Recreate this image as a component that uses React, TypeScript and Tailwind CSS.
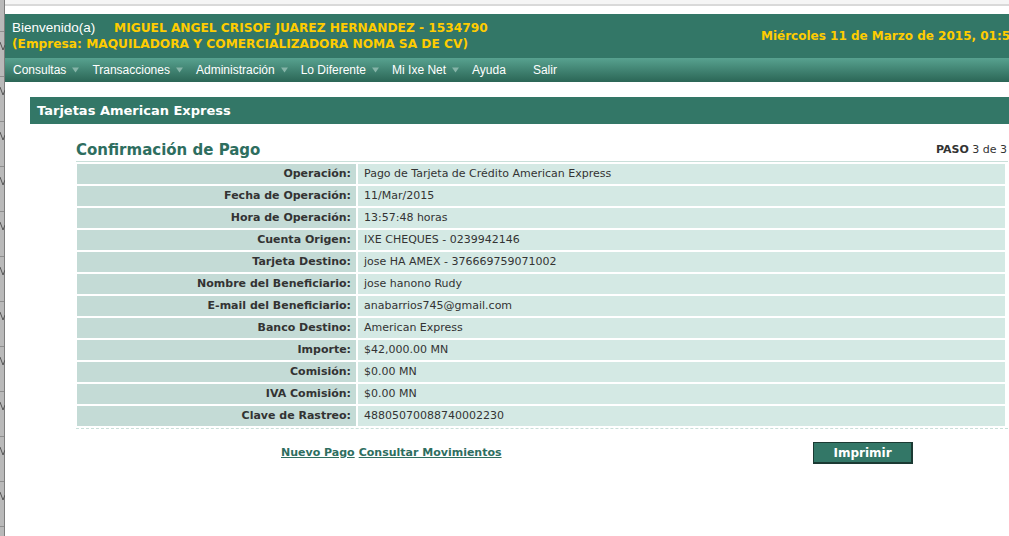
import React from 'react';

const rows: [string, string][] = [
  ['Operación:', 'Pago de Tarjeta de Crédito American Express'],
  ['Fecha de Operación:', '11/Mar/2015'],
  ['Hora de Operación:', '13:57:48 horas'],
  ['Cuenta Origen:', 'IXE CHEQUES - 0239942146'],
  ['Tarjeta Destino:', 'jose HA AMEX - 376669759071002'],
  ['Nombre del Beneficiario:', 'jose hanono Rudy'],
  ['E-mail del Beneficiario:', 'anabarrios745@gmail.com'],
  ['Banco Destino:', 'American Express'],
  ['Importe:', '$42,000.00 MN'],
  ['Comisión:', '$0.00 MN'],
  ['IVA Comisión:', '$0.00 MN'],
  ['Clave de Rastreo:', '48805070088740002230'],
];

const menu = [
  { label: 'Consultas', arrow: true },
  { label: 'Transacciones', arrow: true },
  { label: 'Administración', arrow: true },
  { label: 'Lo Diferente', arrow: true },
  { label: 'Mi Ixe Net', arrow: true },
  { label: 'Ayuda', arrow: false },
  { label: 'Salir', arrow: false },
];

const verdana = "font-['DejaVu_Sans',Verdana,sans-serif]";
const helv = "font-['Liberation_Sans',Arial,sans-serif]";

function Arrow() {
  return (
    <svg width="7" height="6" viewBox="0 0 7 6" className="ml-[6px] mr-[13px]">
      <path d="M0 0.5 L7 0.5 L3.5 5.5 Z" fill="#86b4a8" />
    </svg>
  );
}

function SideStrip() {
  return (
    <div className="w-[5px] shrink-0 bg-[#b9b9b9] border-r border-[#7d7d7d] flex flex-col">
      <div className="h-[32px] shrink-0 border-b border-[#8e8e8e]" />
      {Array.from({ length: 11 }).map((_, i) => (
        <div key={i} className="h-[45px] shrink-0 border-b border-[#8e8e8e] pt-[10px]">
          <svg width="5" height="9" viewBox="0 0 5 9">
            <path d="M0 0 L3 8 L5 3" stroke="#555" strokeWidth="1" fill="none" />
          </svg>
        </div>
      ))}
    </div>
  );
}

export default function App() {
  return (
    <div className="w-[1009px] h-[536px] overflow-hidden flex bg-white">
      <SideStrip />
      <div className="flex-1 min-w-0 overflow-hidden">
        {/* top window edge */}
        <div className="h-[4px] bg-[#f5f5f5]" />
        <div className="h-[2px] bg-[#d9d9d9]" />
        <div className="h-[8px] bg-white" />

        {/* header */}
        <div className="bg-[#337767] pl-[7px] pt-[6px] pb-[6px] flex items-center whitespace-nowrap">
          <div className="w-[749px] shrink-0">
            <div className="flex h-[16px] items-center">
              <span className={`${helv} text-[13.5px] text-white w-[102px] shrink-0`}>Bienvenido(a)</span>
              <span className={`${verdana} text-[12.2px] font-bold text-[#ffcc00]`}>
                MIGUEL ANGEL CRISOF JUAREZ HERNANDEZ - 1534790
              </span>
            </div>
            <div className={`${verdana} h-[16px] flex items-center text-[12.2px] font-bold text-[#ffcc00]`}>
              (Empresa: MAQUILADORA Y COMERCIALIZADORA NOMA SA DE CV)
            </div>
          </div>
          <div className={`${verdana} shrink-0 text-[12px] font-bold text-[#ffcc00]`}>
            Miércoles 11 de Marzo de 2015, 01:57 pm
          </div>
        </div>

        {/* menu */}
        <div className="h-[24px] bg-gradient-to-b from-[#58a290] to-[#2b6656] flex items-center pl-[8px] whitespace-nowrap">
          {menu.map((m) => (
            <div key={m.label} className="flex items-center">
              <span className={`${helv} text-[12px] text-white`}>{m.label}</span>
              {m.arrow ? <Arrow /> : <span className="w-[27px]" />}
            </div>
          ))}
        </div>

        {/* section title */}
        <div className="mt-[15px] ml-[25px] h-[27px] bg-[#337767] flex items-center pl-[7px]">
          <span className={`${verdana} text-[13px] font-bold text-white`}>Tarjetas American Express</span>
        </div>

        {/* content */}
        <div className="ml-[71px] w-[932px]">
          <div className="mt-[16px] h-[22px] flex items-end justify-between border-b border-[#c9dfd9] pb-[1px]">
            <span className={`${verdana} text-[15px] leading-[20px] font-bold text-[#2e6e5f]`}>
              Confirmación de Pago
            </span>
            <span className={`${verdana} text-[11px] leading-[20px] text-[#333] pr-[1px]`}>
              <b>PASO</b> 3 de 3
            </span>
          </div>

          <div className="pt-[2px] pb-[2px] pl-[1px] border-b border-dashed border-[#c9dfd9]">
            <div className="grid grid-cols-[279px_647px] gap-[2px]">
              {rows.map(([label, value]) => (
                <React.Fragment key={label}>
                  <div
                    className={`${verdana} h-[20px] bg-[#c4dbd6] flex items-center justify-end pr-[5px] text-[11px] font-bold text-[#333]`}
                  >
                    {label}
                  </div>
                  <div className={`${verdana} h-[20px] bg-[#d4e9e4] flex items-center pl-[6px] text-[11px] text-[#333]`}>
                    {value}
                  </div>
                </React.Fragment>
              ))}
            </div>
          </div>

          <div className="mt-[13px] h-[22px] flex items-center">
            <div className={`${verdana} ml-[205px] text-[11px] font-bold text-[#2e6e5f] flex gap-[4px]`}>
              <a href="#" className="underline">Nuevo Pago</a>
              <a href="#" className="underline">Consultar Movimientos</a>
            </div>
            <button
              className={`${verdana} ml-[311px] w-[100px] h-[22px] bg-[#337767] border border-[#1b3a33] shadow-[inset_-1px_-1px_0_#1b3a33] text-white text-[12px] font-bold`}
            >
              Imprimir
            </button>
          </div>
        </div>
      </div>
    </div>
  );
}
